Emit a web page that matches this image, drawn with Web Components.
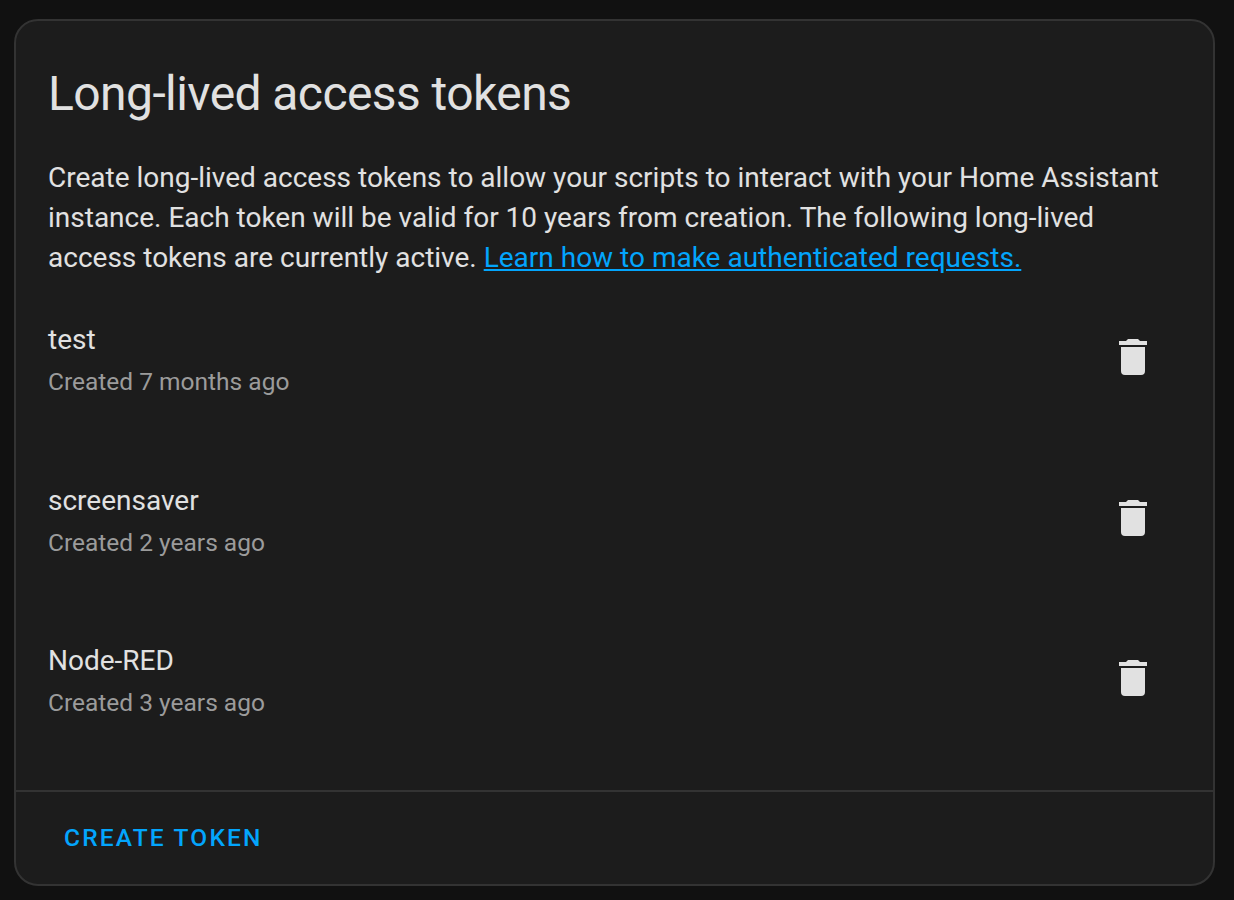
<!DOCTYPE html>
<html lang="en"><head><meta charset="utf-8"><title>Long-lived access tokens</title>
<style>
html,body{margin:0;background:#111;height:900px;overflow:hidden}
body{font-family:Roboto,sans-serif;color:#e1e1e1;padding:19px 19px 0 14px;box-sizing:border-box}
a{color:#03a5fc}
</style></head><body>
<token-card>
<span slot="title">Long-lived access tokens</span>
<span slot="description">Create long-lived access tokens to allow your scripts to interact with your Home Assistant instance. Each token will be valid for 10 years from creation. The following long-lived access tokens are currently active. <a href="#">Learn how to make authenticated requests.</a></span>
<token-row><span slot="name">test</span><span slot="created">Created 7 months ago</span></token-row>
<token-row><span slot="name">screensaver</span><span slot="created">Created 2 years ago</span></token-row>
<token-row><span slot="name">Node-RED</span><span slot="created">Created 3 years ago</span></token-row>
<text-button slot="actions">Create token</text-button>
</token-card>
<script>
const define=(name,html)=>customElements.define(name,class extends HTMLElement{
  constructor(){super();this.attachShadow({mode:'open'}).innerHTML=html;}
});
define('delete-icon',`<style>:host{display:block;width:48px;height:48px}svg{display:block}</style>
<svg width="48" height="48" viewBox="0 0 24 24" fill="currentColor"><path d="M19,4H15.5L14.5,3H9.5L8.5,4H5V6H19M6,19A2,2 0 0,0 8,21H16A2,2 0 0,0 18,19V7H6V19Z"/></svg>`);
define('token-row',`<style>
:host{display:flex;justify-content:space-between;align-items:flex-start;height:160.5px}
.name{font-size:28px;line-height:39px}
.created{font-size:24.5px;line-height:39px;margin-top:3px;color:#9b9b9b}
delete-icon{margin:13px 24px 0 0}
</style><div><div class="name"><slot name="name"></slot></div><div class="created"><slot name="created"></slot></div></div><delete-icon></delete-icon>`);
define('text-button',`<style>:host{display:block;font-size:24.5px;line-height:39px;font-weight:500;letter-spacing:2.18px;text-transform:uppercase;color:#03a5fc}</style><slot></slot>`);
define('token-card',`<style>
:host{display:flex;flex-direction:column;box-sizing:border-box;height:867px;border:2px solid #333;border-radius:24px;background:#1c1c1c}
h1{margin:0;padding:40px 32px 0;font-size:48px;line-height:65px;font-weight:400;letter-spacing:-.576px}
.content{padding:31.5px 32px 0;flex:1;min-height:0}
p{margin:0 0 42.5px;font-size:28px;line-height:40px}
.actions{flex:none;border-top:2px solid #333;height:94px;box-sizing:border-box;padding:26px 48px}
</style><h1><slot name="title"></slot></h1><div class="content"><p><slot name="description"></slot></p><slot></slot></div><div class="actions"><slot name="actions"></slot></div>`);
</script></body></html>
